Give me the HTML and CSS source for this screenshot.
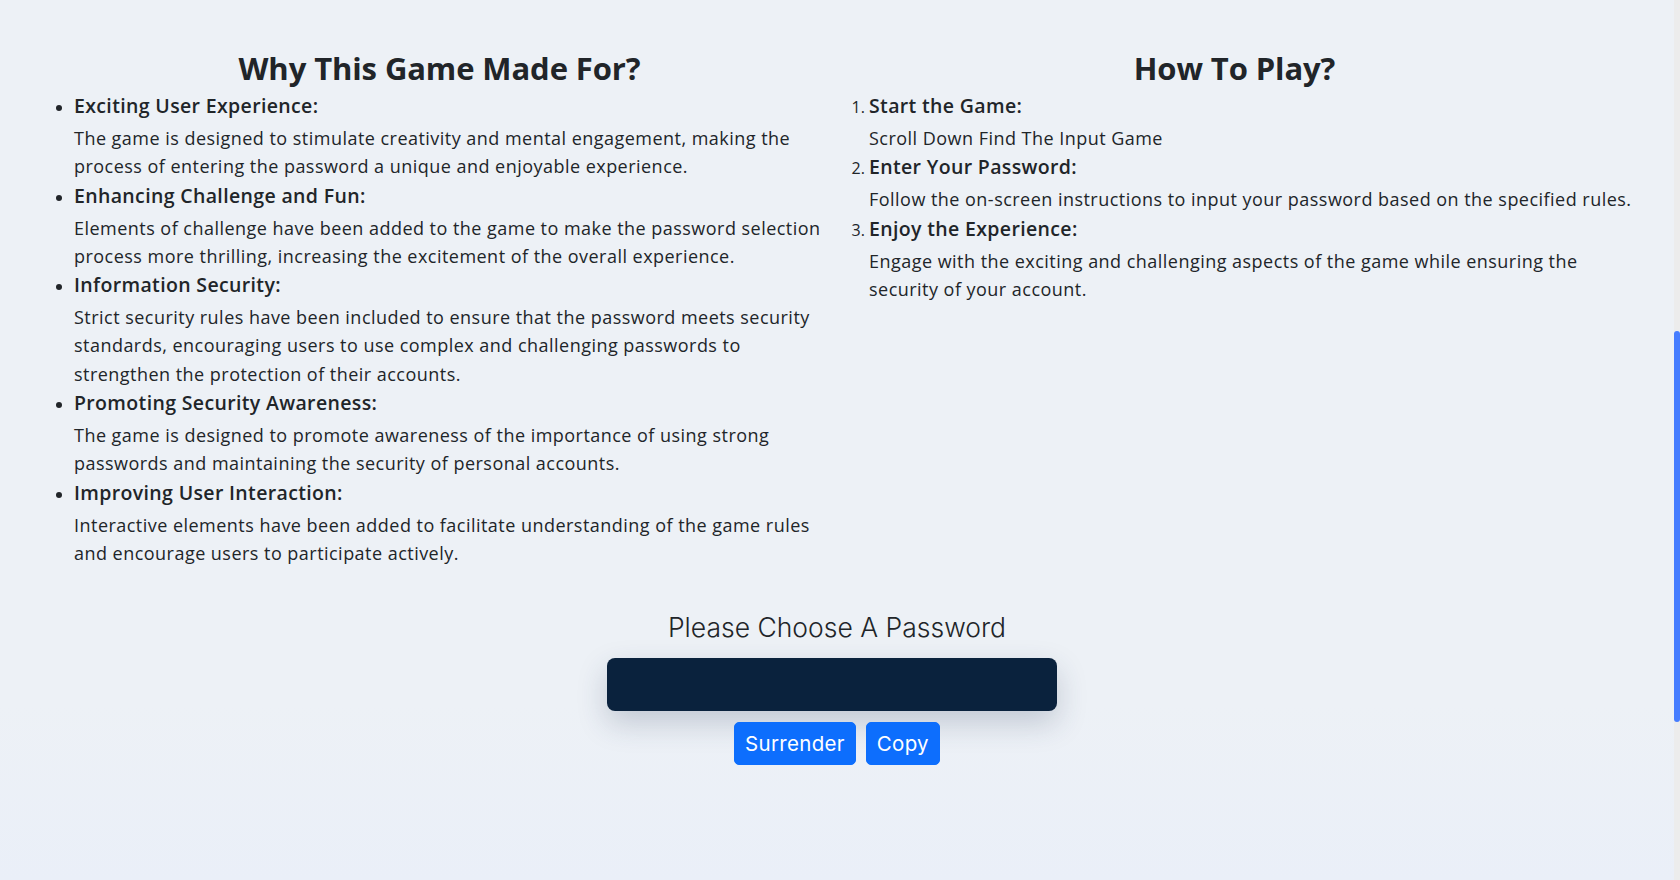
FILE: index.html
```html
<!DOCTYPE html>
<html lang="en">
<head>
<meta charset="utf-8">
<title>Password Game</title>
<link rel="stylesheet" href="styles.css">
</head>
<body>
<div class="page">
  <div class="info">
    <section class="col">
      <h2 class="col-title">Why This Game Made For?</h2>
      <ul class="list">
        <li>
          <div class="item-title">Exciting User Experience:</div>
          <p class="item-desc">The game is designed to stimulate creativity and mental engagement, making the process of entering the password a unique and enjoyable experience.</p>
        </li>
        <li>
          <div class="item-title">Enhancing Challenge and Fun:</div>
          <p class="item-desc">Elements of challenge have been added to the game to make the password selection process more thrilling, increasing the excitement of the overall experience.</p>
        </li>
        <li>
          <div class="item-title">Information Security:</div>
          <p class="item-desc">Strict security rules have been included to ensure that the password meets security standards, encouraging users to use complex and challenging passwords to strengthen the protection of their accounts.</p>
        </li>
        <li>
          <div class="item-title">Promoting Security Awareness:</div>
          <p class="item-desc">The game is designed to promote awareness of the importance of using strong passwords and maintaining the security of personal accounts.</p>
        </li>
        <li>
          <div class="item-title">Improving User Interaction:</div>
          <p class="item-desc">Interactive elements have been added to facilitate understanding of the game rules and encourage users to participate actively.</p>
        </li>
      </ul>
    </section>
    <section class="col">
      <h2 class="col-title">How To Play?</h2>
      <ol class="list">
        <li>
          <div class="item-title">Start the Game:</div>
          <p class="item-desc">Scroll Down Find The Input Game</p>
        </li>
        <li>
          <div class="item-title">Enter Your Password:</div>
          <p class="item-desc">Follow the on-screen instructions to input your password based on the specified rules.</p>
        </li>
        <li>
          <div class="item-title">Enjoy the Experience:</div>
          <p class="item-desc">Engage with the exciting and challenging aspects of the game while ensuring the security of your account.</p>
        </li>
      </ol>
    </section>
  </div>

  <div class="game">
    <h3 class="game-label">Please Choose A Password</h3>
    <div class="pw-input" aria-label="password"></div>
    <div class="actions">
      <button class="btn">Surrender</button>
      <button class="btn">Copy</button>
    </div>
  </div>
</div>
<div class="scrollbar"><div class="thumb"></div></div>
</body>
</html>
```

FILE: styles.css
```css
html, body {
  margin: 0;
  padding: 0;
  height: 100%;
}

body {
  background: linear-gradient(180deg, #edf1f6 0%, #edf1f6 80%, #eaeff8 100%);
  color: #212529;
  font-family: "Open Sans", "Noto Sans", sans-serif;
  overflow: hidden;
}

.page {
  margin-right: 6px;
  padding: 48px 42px 0;
}

.info {
  display: grid;
  grid-template-columns: 1fr 1fr;
}

.col-title {
  margin: 0 0 4px;
  text-align: center;
  font-size: 31px;
  line-height: 40px;
  font-weight: 700;
  letter-spacing: -0.1px;
}

.list {
  margin: 0;
  padding-left: 32px;
}

.list li {
  margin: 0;
}

.item-title {
  font-size: 19.5px;
  font-weight: 600;
  line-height: 28px;
  margin-bottom: 4px;
  letter-spacing: 0.35px;
}

.item-desc {
  margin: 0 0 1px;
  font-size: 18px;
  line-height: 28.3px;
  letter-spacing: 0.47px;
}

.game {
  margin-top: 41px;
  display: flex;
  flex-direction: column;
  align-items: center;
}

.game-label {
  margin: 0;
  font-family: Inter, "Noto Sans", sans-serif;
  font-weight: 300;
  font-size: 26.5px;
  line-height: 36px;
}

.pw-input {
  margin-top: 13px;
  margin-right: 10px;
  width: 450px;
  height: 53px;
  border-radius: 8px;
  background: #0a223d;
  box-shadow: 0 12px 30px rgba(40, 60, 90, 0.22);
}

.actions {
  margin-top: 11px;
  display: flex;
  gap: 10px;
}

.btn {
  font-family: Inter, "Noto Sans", sans-serif;
  font-size: 20.5px;
  letter-spacing: 0.3px;
  line-height: 41px;
  padding: 0 10px;
  border: 1px solid #0d6efd;
  border-radius: 5px;
  background: #0d6efd;
  color: #fff;
  cursor: pointer;
}

.scrollbar {
  position: fixed;
  top: 0;
  right: 0;
  width: 6px;
  height: 100%;
  background: #ececec;
}

.thumb {
  position: absolute;
  top: 331px;
  left: 0;
  width: 6px;
  height: 391px;
  border-radius: 3px;
  background: #467dff;
}
```
